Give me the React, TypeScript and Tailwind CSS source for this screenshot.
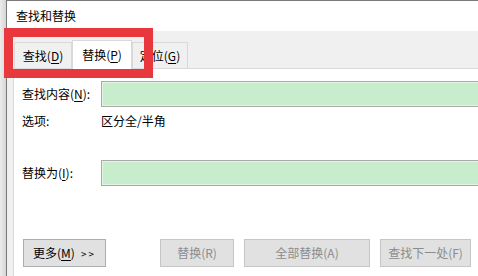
import React from "react"

const font = { fontFamily: '"Noto Sans CJK SC", "Noto Sans", sans-serif' }

function Key({ k }: { k: string }) {
  return <span className="underline underline-offset-2 decoration-1">{k}</span>
}

function Tab({ label, k, active, width }: { label: string; k: string; active?: boolean; width: string }) {
  return (
    <div
      className={
        active
          ? `${width} h-[29px] -mb-px relative bg-white border border-b-0 border-[#d9d9d9] flex items-center justify-center`
          : `${width} h-[26px] bg-[#f0f0f0] border border-b-0 border-[#d9d9d9] flex items-center justify-center`
      }
    >
      <span className="text-[12px] text-black leading-none">
        {label}(<Key k={k} />)
      </span>
    </div>
  )
}

function Field({ label, k }: { label: string; k: string }) {
  return (
    <div className="flex items-center h-[26px]">
      <div className="w-[79px] shrink-0 text-[12px] text-black">
        {label}(<Key k={k} />):
      </div>
      <div className="flex-1 h-[26px] bg-[#c7edcc] border border-[#a9a9a9] shadow-[inset_0_0_0_1px_#e2f5e5]" />
    </div>
  )
}

export default function App() {
  return (
    <div className="w-[478px] h-[276px] overflow-hidden relative flex bg-[#e4e4e4]" style={font}>
      {/* fondo de la ventana detrás */}
      <div className="w-[6px] shrink-0 bg-gradient-to-r from-[#ececec] to-[#d6d6d6]" />

      <div className="w-[540px] shrink-0 flex flex-col border-l border-t border-[#7a7a7a]">
        <div className="h-[30px] bg-white flex items-center pl-[9px]">
          <span className="text-[12px] text-black">查找和替换</span>
        </div>

        <div className="flex-1 bg-[#f0f0f0] pl-[6px] flex flex-col">
          {/* pestañas */}
          <div className="h-[37px] flex items-end pl-[1px] pt-[1px]">
            <Tab label="查找" k="D" width="w-[58px]" />
            <Tab label="替换" k="P" width="w-[60px]" active />
            <Tab label="定位" k="G" width="w-[56px]" />
          </div>

          <div className="flex-1 bg-white border-l border-t border-[#d9d9d9] pl-[8px] pt-[12px] flex flex-col">
            <Field label="查找内容" k="N" />

            <div className="flex items-center h-[16px] mt-[6px] text-[12px] text-black">
              <div className="w-[79px] shrink-0">选项:</div>
              <div>区分全/半角</div>
            </div>

            <div className="mt-[31px]">
              <Field label="替换为" k="I" />
            </div>

            <div className="mt-[53px] flex items-center pl-[1px] text-[12px]">
              <button className="w-[83px] h-[28px] bg-[#e1e1e1] border border-[#adadad] text-black flex items-center justify-center gap-[6px]">
                <span>
                  更多(<Key k="M" />)
                </span>
                <span className="text-[10px] tracking-[2px]">&gt;&gt;</span>
              </button>
              <button className="ml-[54px] w-[74px] h-[28px] bg-[#e1e1e1] border border-[#c6c6c6] text-[#8c8c8c]">
                替换(R)
              </button>
              <button className="ml-[10px] w-[126px] h-[28px] bg-[#e1e1e1] border border-[#c6c6c6] text-[#8c8c8c]">
                全部替换(A)
              </button>
              <button className="ml-[10px] w-[91px] h-[28px] bg-[#e1e1e1] border border-[#c6c6c6] text-[#8c8c8c]">
                查找下一处(F)
              </button>
            </div>
          </div>
        </div>
      </div>

      {/* recuadro rojo de resaltado */}
      <div className="absolute left-[4px] top-[28px] w-[149px] h-[50px] border-[9px] border-[#e8383d] pointer-events-none" />
    </div>
  )
}
